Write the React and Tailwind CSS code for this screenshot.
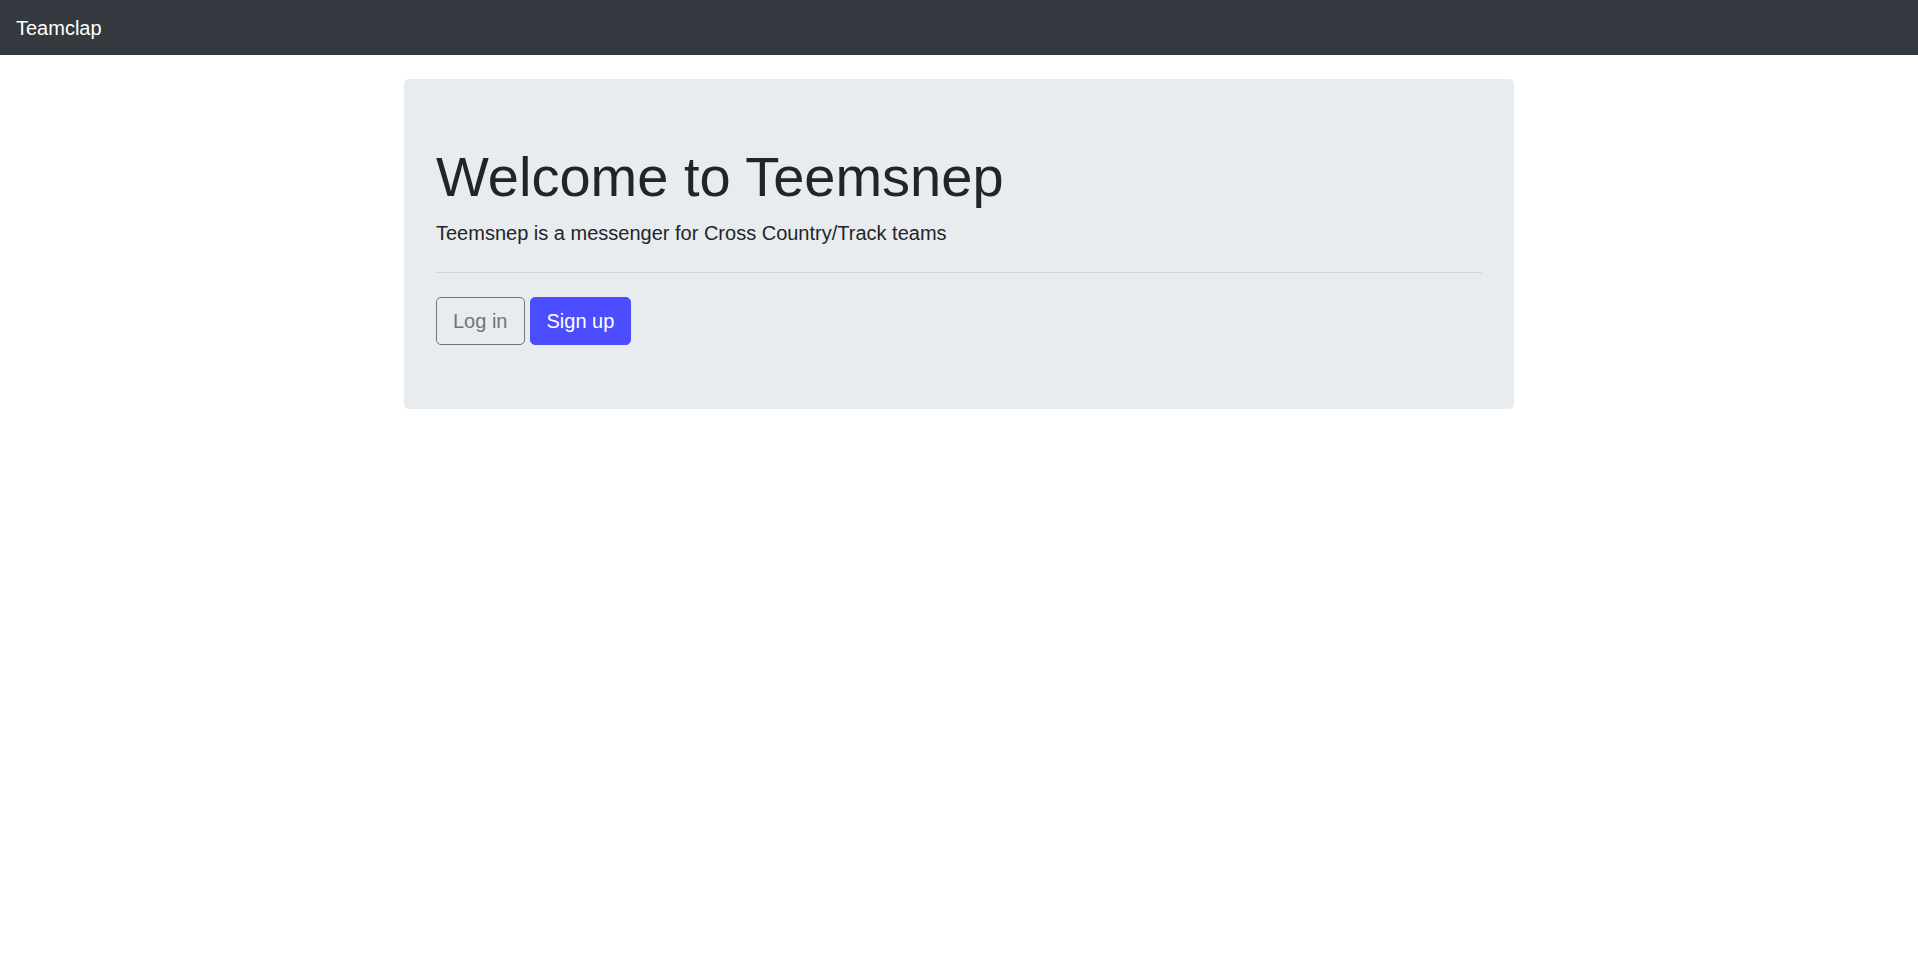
import React from 'react';

export default function App() {
  return (
    <div className="min-h-screen bg-white font-['Liberation_Sans',Arial,sans-serif] text-[#212529]">
      {/* Navbar */}
      <nav className="bg-[#343a40] h-[55px] px-4 flex items-center">
        <a href="#" className="text-white text-[20px] leading-[30px]">Teamclap</a>
      </nav>

      {/* Jumbotron */}
      <div className="mt-6 mx-auto w-[1110px] bg-[#e9ecef] rounded-[5px] px-8 py-16">
        <h1 className="text-[56px] font-light leading-[1.2] mb-2">Welcome to Teemsnep</h1>
        <p className="text-[20px] font-light leading-[1.5]">
          Teemsnep is a messenger for Cross Country/Track teams
        </p>
        <hr className="my-6 border-t border-black/10" />
        <div className="flex gap-[5px]">
          <button className="h-12 px-4 text-[20px] leading-[1.5] text-[#6c757d] border border-[#6c757d] rounded-[5px]">
            Log in
          </button>
          <button className="h-12 px-4 text-[20px] leading-[1.5] text-white bg-[#4b4dff] border border-[#4b4dff] rounded-[5px]">
            Sign up
          </button>
        </div>
      </div>
    </div>
  );
}
